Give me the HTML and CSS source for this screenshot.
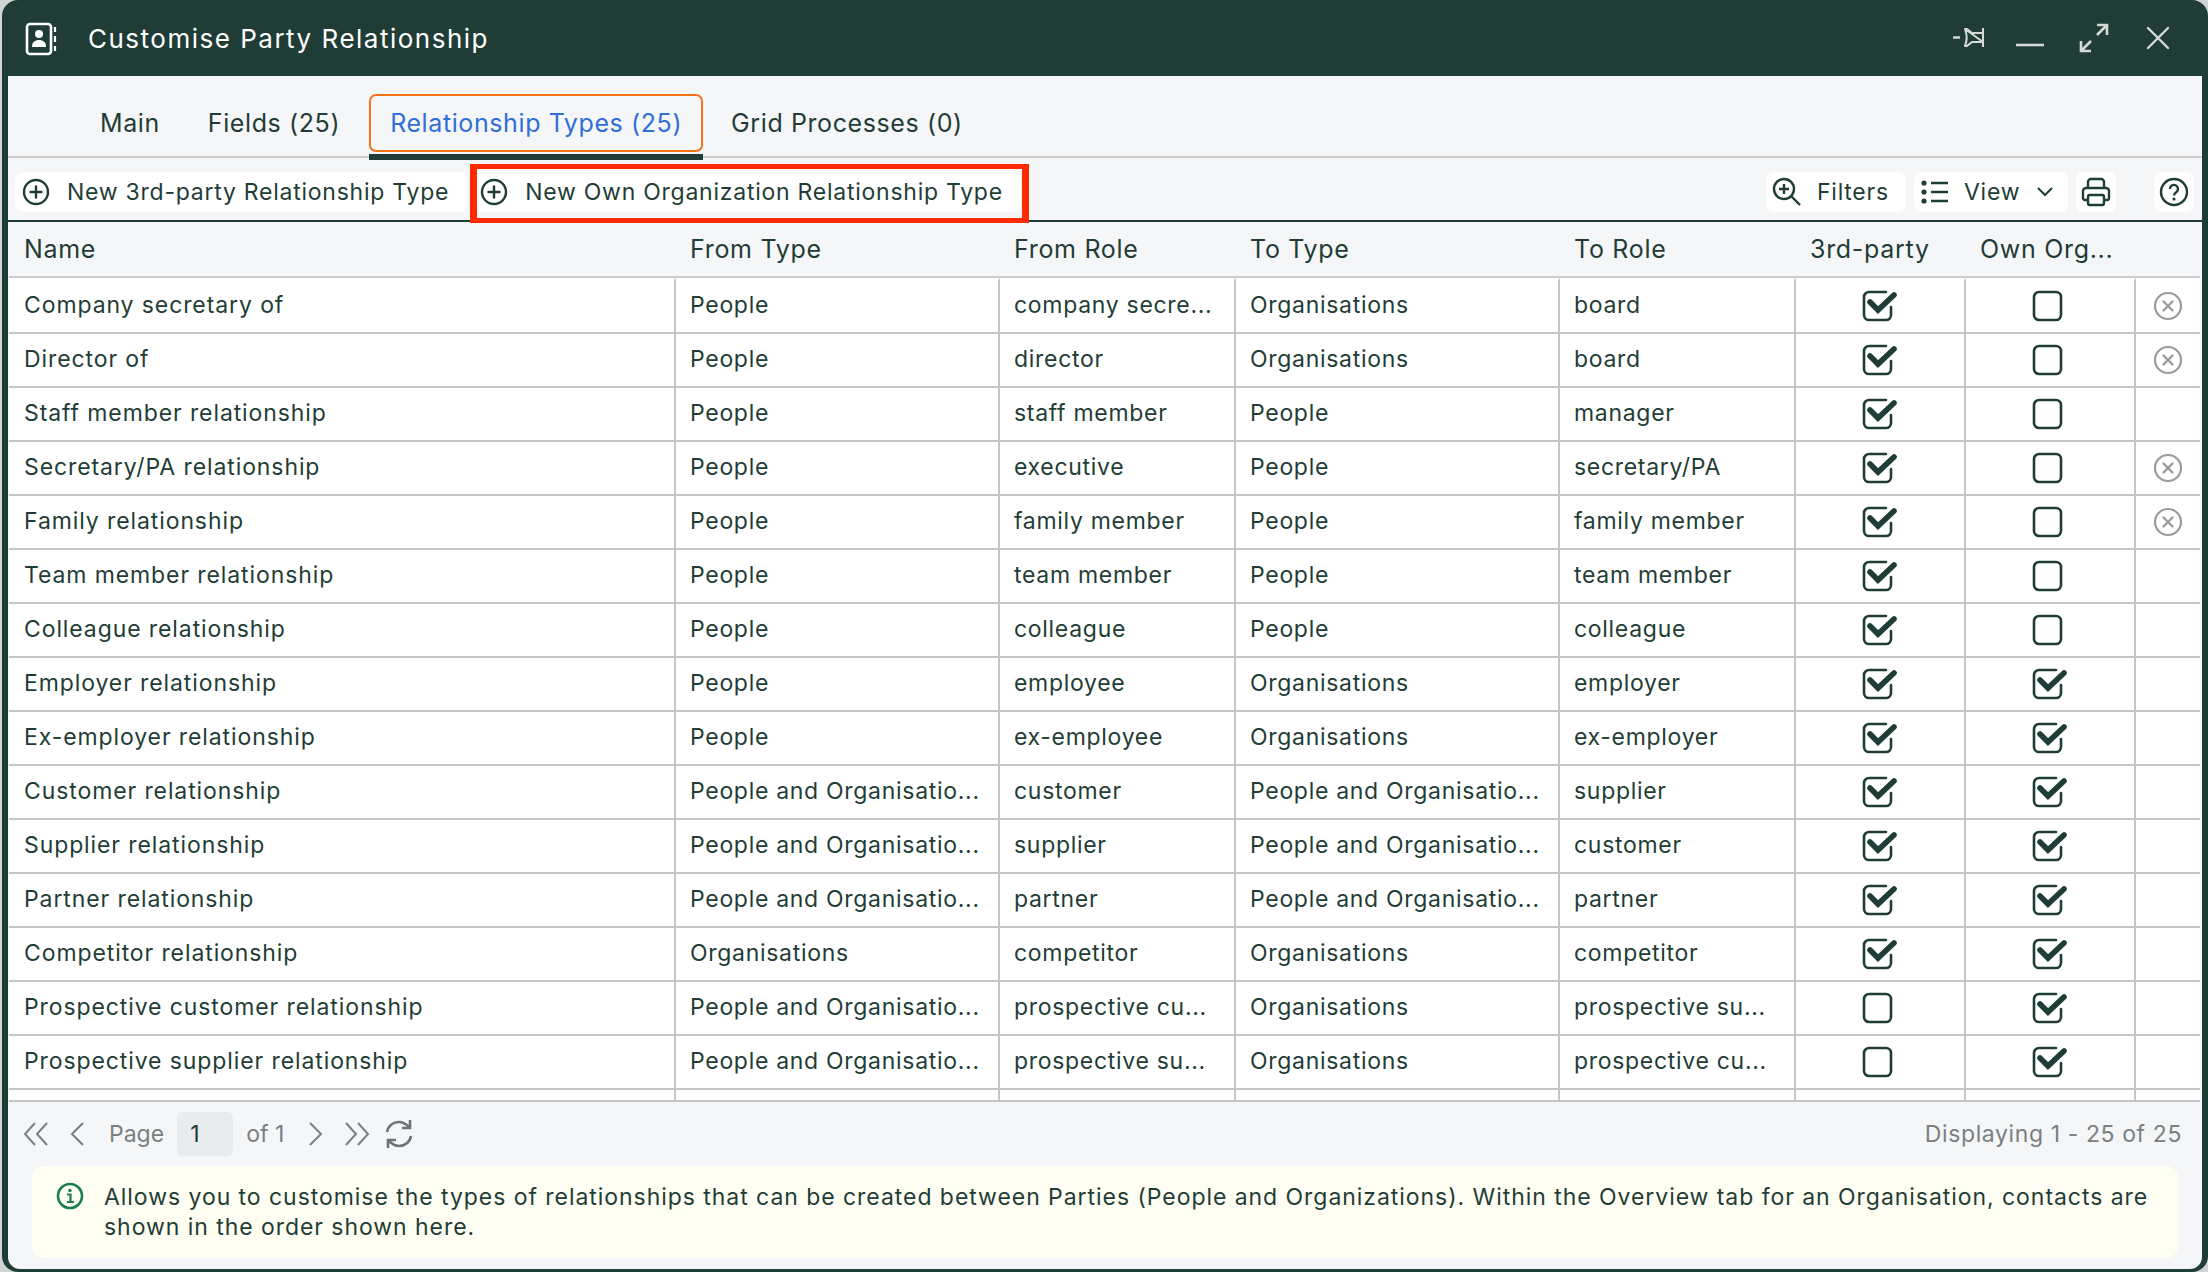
FILE: index.html
```html
<!DOCTYPE html>
<html lang="en">
<head>
  <meta charset="UTF-8" />
  <title>Customise Party Relationship</title>
  <link rel="stylesheet" href="styles.css">
</head>
<body>
  <svg class="sprite" width="0" height="0">
    <symbol id="checked" viewBox="0 0 36 32">
      <path d="M24 2H7a5 5 0 0 0-5 5v18a5 5 0 0 0 5 5h17a5 5 0 0 0 5-5v-8" fill="none" stroke="currentColor" stroke-width="2.6" stroke-linecap="round"/>
      <path d="M8 12l8 8L32 5" fill="none" stroke="currentColor" stroke-width="5.6" stroke-linejoin="miter" stroke-linecap="round"/>
    </symbol>
    <symbol id="unchecked" viewBox="0 0 36 32">
      <rect x="2" y="2" width="27" height="28" rx="5" fill="none" stroke="currentColor" stroke-width="2.6"/>
    </symbol>
    <symbol id="remove" viewBox="0 0 30 30">
      <circle cx="15" cy="15" r="13" fill="none" stroke="currentColor" stroke-width="2.2"/>
      <path d="M10.5 10.5l9 9M19.5 10.5l-9 9" fill="none" stroke="currentColor" stroke-width="2.4" stroke-linecap="round"/>
    </symbol>
    <symbol id="plus-circle" viewBox="0 0 28 28">
      <circle cx="14" cy="14" r="12" fill="none" stroke="currentColor" stroke-width="2.4"/>
      <path d="M14 8.5v11M8.5 14h11" fill="none" stroke="currentColor" stroke-width="2.4" stroke-linecap="round"/>
    </symbol>
  </svg>

  <div class="window">
    <div class="titlebar">
      <svg class="title-icon" width="32" height="34" viewBox="0 0 32 34">
        <rect x="2" y="2" width="24" height="30" rx="3" fill="none" stroke="currentColor" stroke-width="2.6"/>
        <circle cx="14" cy="12" r="4" fill="currentColor"/>
        <path d="M7 25c0-5 3-7 7-7s7 2 7 7z" fill="currentColor"/>
        <path d="M30 5v5M30 14v6M30 24v5" fill="none" stroke="currentColor" stroke-width="2.2"/>
      </svg>
      <span class="title">Customise Party Relationship</span>
      <div class="win-controls">
        <svg width="32" height="22" viewBox="0 0 32 22">
          <path d="M0 10.500h7" stroke="currentColor" stroke-width="2.4" fill="none"/>
          <path d="M12 2h2l5 4h11M30 1v19M30 15H19l-5 4h-2c2-5 2-12 0-17z" stroke="currentColor" stroke-width="2" fill="none" stroke-linejoin="round"/>
        </svg>
        <svg class="ctl-min" width="30" height="6" viewBox="0 0 30 6">
          <path d="M1 3h28" stroke="currentColor" stroke-width="2.6" fill="none"/>
        </svg>
        <svg class="ctl-max" width="32" height="32" viewBox="0 0 32 32">
          <path d="M19 3h10v10M29 3L19 13M3 19v10h10M3 29l10-10" stroke="currentColor" stroke-width="2.6" fill="none"/>
        </svg>
        <svg class="ctl-close" width="24" height="24" viewBox="0 0 24 24">
          <path d="M2 2l20 20M22 2L2 22" stroke="currentColor" stroke-width="2.4" fill="none" stroke-linecap="round"/>
        </svg>
      </div>
    </div>

    <div class="content">
      <div class="tabs">
        <a class="tab tab-main">Main</a>
        <a class="tab tab-fields">Fields (25)</a>
        <a class="tab active">Relationship Types (25)</a>
        <a class="tab tab-grid">Grid Processes (0)</a>
      </div>

      <div class="toolbar">
        <button class="btn"><svg width="28" height="28"><use href="#plus-circle"/></svg>New 3rd-party Relationship Type</button>
        <button class="btn btn-marked"><svg width="28" height="28"><use href="#plus-circle"/></svg>New Own Organization Relationship Type</button>
        <div class="toolbar-right">
          <button class="btn btn-filters">
            <svg width="30" height="30" viewBox="0 0 30 30">
              <circle cx="12" cy="12" r="10" fill="none" stroke="currentColor" stroke-width="2.4"/>
              <path d="M12 7v10M7 12h10" stroke="currentColor" stroke-width="2.4" fill="none"/>
              <path d="M19 19l9 9" stroke="currentColor" stroke-width="2.4" fill="none"/>
            </svg>
            Filters
          </button>
          <button class="btn btn-view">
            <svg width="28" height="24" viewBox="0 0 28 24">
              <circle cx="3" cy="3" r="2.6" fill="currentColor"/>
              <circle cx="3" cy="12" r="2.6" fill="currentColor"/>
              <circle cx="3" cy="21" r="2.6" fill="currentColor"/>
              <path d="M10 3h17M10 12h17M10 21h17" stroke="currentColor" stroke-width="2.6" fill="none"/>
            </svg>
            View
            <svg class="chev" width="16" height="10" viewBox="0 0 16 10">
              <path d="M1 1l7 7 7-7" stroke="currentColor" stroke-width="2" fill="none"/>
            </svg>
          </button>
          <button class="btn btn-icon">
            <svg width="30" height="30" viewBox="0 0 30 30">
              <path d="M7 11V5a3 3 0 0 1 3-3h10a3 3 0 0 1 3 3v6" fill="none" stroke="currentColor" stroke-width="2.4"/>
              <path d="M7 23H4a2 2 0 0 1-2-2v-7a3 3 0 0 1 3-3h20a3 3 0 0 1 3 3v7a2 2 0 0 1-2 2h-3" fill="none" stroke="currentColor" stroke-width="2.4"/>
              <rect x="7" y="18" width="16" height="10" rx="2" fill="none" stroke="currentColor" stroke-width="2.4"/>
            </svg>
          </button>
          <button class="btn btn-icon btn-help">
            <svg width="30" height="30" viewBox="0 0 30 30">
              <circle cx="15" cy="15" r="13" fill="none" stroke="currentColor" stroke-width="2.4"/>
              <path d="M11 12a4 4 0 1 1 6.500 3c-1.500 1-2.500 1.800-2.500 3.500" fill="none" stroke="currentColor" stroke-width="2.400"/>
              <circle cx="15" cy="22" r="1.600" fill="currentColor"/>
            </svg>
          </button>
        </div>
      </div>

      <table class="grid">
        <colgroup>
          <col class="c-name"><col class="c-wide"><col class="c-narrow"><col class="c-wide"><col class="c-narrow"><col class="c-flag"><col class="c-flag"><col class="c-del">
        </colgroup>
        <thead>
          <tr><th>Name</th><th>From Type</th><th>From Role</th><th>To Type</th><th>To Role</th><th>3rd-party</th><th>Own Org...</th><th></th></tr>
        </thead>
        <tbody id="rows"></tbody>
      </table>

      <div class="pager">
        <svg class="pg-first" width="26" height="26" viewBox="0 0 26 26"><path d="M12 2L2 13l10 11M24 2L14 13l10 11" fill="none" stroke="currentColor" stroke-width="2"/></svg>
        <svg class="pg-prev" width="16" height="26" viewBox="0 0 16 26"><path d="M14 2L3 13l11 11" fill="none" stroke="currentColor" stroke-width="2"/></svg>
        <span class="pg-label">Page</span>
        <span class="pg-input">1</span>
        <span class="pg-of">of 1</span>
        <svg class="pg-next" width="16" height="26" viewBox="0 0 16 26"><path d="M2 2l11 11L2 24" fill="none" stroke="currentColor" stroke-width="2"/></svg>
        <svg class="pg-last" width="26" height="26" viewBox="0 0 26 26"><path d="M2 2l10 11L2 24M14 2l10 11-10 11" fill="none" stroke="currentColor" stroke-width="2"/></svg>
        <svg class="pg-refresh" width="30" height="30" viewBox="0 0 30 30">
          <path d="M3 13C4 7 9 3 15 3c4 0 7 2 10 5M27 17c-1 6-6 10-12 10-4 0-7-2-10-5" fill="none" stroke="currentColor" stroke-width="2.600"/>
          <path d="M26 1v8h-8M4 29v-8h8" fill="none" stroke="currentColor" stroke-width="2.600"/>
        </svg>
        <span class="pg-total">Displaying 1 - 25 of 25</span>
      </div>

      <div class="notice">
        <svg width="28" height="28" viewBox="0 0 28 28">
          <circle cx="14" cy="14" r="12" fill="none" stroke="#1c7c54" stroke-width="2.600"/>
          <circle cx="14" cy="8.500" r="1.700" fill="#1c7c54"/>
          <path d="M11 12.500h3.500v7M11 20h7" fill="none" stroke="#1c7c54" stroke-width="2.200"/>
        </svg>
        <p>Allows you to customise the types of relationships that can be created between Parties (People and Organizations). Within the Overview tab for an Organisation, contacts are shown in the order shown here.</p>
      </div>
    </div>
  </div>

  <script>
    // name, from type, from role, to type, to role, 3rd-party, own org, removable
    const po = "People and Organisatio...";
    const data = [
      ["Company secretary of", "People", "company secre...", "Organisations", "board", 1, 0, 1],
      ["Director of", "People", "director", "Organisations", "board", 1, 0, 1],
      ["Staff member relationship", "People", "staff member", "People", "manager", 1, 0, 0],
      ["Secretary/PA relationship", "People", "executive", "People", "secretary/PA", 1, 0, 1],
      ["Family relationship", "People", "family member", "People", "family member", 1, 0, 1],
      ["Team member relationship", "People", "team member", "People", "team member", 1, 0, 0],
      ["Colleague relationship", "People", "colleague", "People", "colleague", 1, 0, 0],
      ["Employer relationship", "People", "employee", "Organisations", "employer", 1, 1, 0],
      ["Ex-employer relationship", "People", "ex-employee", "Organisations", "ex-employer", 1, 1, 0],
      ["Customer relationship", po, "customer", po, "supplier", 1, 1, 0],
      ["Supplier relationship", po, "supplier", po, "customer", 1, 1, 0],
      ["Partner relationship", po, "partner", po, "partner", 1, 1, 0],
      ["Competitor relationship", "Organisations", "competitor", "Organisations", "competitor", 1, 1, 0],
      ["Prospective customer relationship", po, "prospective cu...", "Organisations", "prospective su...", 0, 1, 0],
      ["Prospective supplier relationship", po, "prospective su...", "Organisations", "prospective cu...", 0, 1, 0],
    ];

    function flag(on) {
      return `<td class="flag"><svg width="36" height="32"><use href="#${on ? "checked" : "unchecked"}"/></svg></td>`;
    }

    let html = "";
    data.forEach((r) => {
      html += "<tr>";
      for (let i = 0; i < 5; i++) html += `<td>${r[i]}</td>`;
      html += flag(r[5]) + flag(r[6]);
      html += `<td class="del">${r[7] ? '<svg width="30" height="30"><use href="#remove"/></svg>' : ""}</td>`;
      html += "</tr>";
    });
    html += '<tr class="cut"><td></td><td></td><td></td><td></td><td></td><td></td><td></td><td></td></tr>';
    document.getElementById("rows").innerHTML = html;
  </script>
</body>
</html>
```

FILE: styles.css
```css
* {
  box-sizing: border-box;
}
body {
  margin: 0;
  height: 1272px;
  background: #d2d4d4;
  font-family: Inter, "Liberation Sans", sans-serif;
  font-size: 23px;
  letter-spacing: 0.7px;
  color: #1f3d36;
  overflow: hidden;
}
.sprite {
  position: absolute;
}
.window {
  margin-left: 2px;
  height: 1272px;
  background: #1f3d36;
  border-radius: 16px;
  padding: 0 6px 3px 6px;
  display: flex;
  flex-direction: column;
}
.titlebar {
  height: 76px;
  flex: none;
  display: flex;
  align-items: center;
  color: #fff;
}
.title-icon {
  margin-left: 17px;
  margin-top: 2px;
}
.title {
  margin-left: 31px;
  font-size: 26px;
  letter-spacing: 1.5px;
}
.win-controls {
  margin-left: auto;
  display: flex;
  align-items: center;
  color: #d5dad8;
  padding-right: 32px;
}
.ctl-min {
  margin: 14px 0 0 30px;
}
.ctl-max {
  margin-left: 33px;
}
.ctl-close {
  margin-left: 36px;
}
.content {
  flex: 1;
  background: #f5f6f8;
  border-radius: 0 0 12px 12px;
  display: flex;
  flex-direction: column;
}
.tabs {
  height: 82px;
  flex: none;
  border-bottom: 2px solid #cccccc;
  padding: 18px 0 0 68px;
  display: flex;
  align-items: flex-start;
  font-size: 25px;
  letter-spacing: 0.6px;
}
.tab {
  height: 58px;
  padding: 0 24px;
  display: flex;
  align-items: center;
}
.tab-fields {
  margin-right: 5px;
}
.tab.active {
  position: relative;
  color: #2f6fd6;
  padding: 0 19px;
  border: 2px solid #f97316;
  border-radius: 7px;
}
.tab.active::after {
  content: "";
  position: absolute;
  left: -2px;
  right: -2px;
  bottom: -10px;
  height: 6px;
  background: #1f3d36;
}
.tab-grid {
  margin-left: 4px;
}
.toolbar {
  height: 64px;
  flex: none;
  border-bottom: 2px solid #1f3d36;
  padding: 14px 8px 0 7px;
  display: flex;
  align-items: flex-start;
  gap: 6px;
}
.btn {
  height: 40px;
  padding: 0 18px 0 7px;
  border: 0;
  border-radius: 8px;
  background: #fff;
  font: inherit;
  letter-spacing: 0.75px;
  color: inherit;
  display: flex;
  align-items: center;
  gap: 17px;
  white-space: nowrap;
}
.btn-marked {
  position: relative;
}
.btn-marked::after {
  content: "";
  position: absolute;
  left: -3px;
  right: -8px;
  top: -8px;
  bottom: -11px;
  border: solid #ff2a00;
  border-width: 5px 7px;
}
.toolbar-right {
  margin-left: auto;
  display: flex;
  gap: 8px;
}
.btn-filters {
  width: 140px;
  padding: 0 0 0 6px;
  gap: 15px;
}
.btn-view {
  width: 154px;
  padding: 0 0 0 7px;
  gap: 15px;
}
.chev {
  margin-left: 2px;
}
.btn-icon {
  width: 40px;
  padding: 0;
  justify-content: center;
}
.btn-help {
  margin-left: 30px;
}
.grid {
  width: 2191px;
  margin-left: 1px;
  border-collapse: separate;
  border-spacing: 0;
  table-layout: fixed;
  flex: none;
}
.c-name {
  width: 667px;
}
.c-wide {
  width: 324px;
}
.c-narrow {
  width: 236px;
}
.c-flag {
  width: 170px;
}
th {
  height: 56px;
  padding: 0 0 0 14px;
  border-bottom: 2px solid #cccccc;
  text-align: left;
  font-size: 25px;
  font-weight: 400;
  white-space: nowrap;
}
th:first-child,
td:first-child {
  padding-left: 15px;
}
td {
  height: 54px;
  padding: 0 0 2px 14px;
  background: #fff;
  border-bottom: 2px solid #c6c6c6;
  border-right: 2px solid #c6c6c6;
  white-space: nowrap;
  overflow: hidden;
}
td:first-child {
  letter-spacing: 0.9px;
}
tbody tr:first-child td {
  height: 56px;
  border-top: 2px solid #fff;
}
td:last-child {
  border-right: 0;
}
td.flag,
td.del {
  padding: 0;
  text-align: center;
  line-height: 0;
}
td.del {
  color: #9a9a9a;
}
tr.cut td {
  height: 12px;
  padding: 0;
}
.pager {
  height: 64px;
  flex: none;
  padding: 0 20px 0 15px;
  display: flex;
  align-items: center;
  color: #7a7f80;
}
.pg-prev {
  margin-left: 20px;
}
.pg-label {
  margin-left: 24px;
  letter-spacing: 0;
}
.pg-input {
  width: 56px;
  height: 44px;
  margin-left: 13px;
  padding-left: 13px;
  background: #e8ecef;
  border-radius: 6px;
  color: #1f3d36;
  display: flex;
  align-items: center;
}
.pg-of {
  margin-left: 13px;
  letter-spacing: 0;
}
.pg-next {
  margin-left: 24px;
}
.pg-last {
  margin-left: 20px;
}
.pg-refresh {
  margin-left: 14px;
  color: #6e7375;
}
.pg-total {
  margin-left: auto;
  letter-spacing: 0.6px;
}
.notice {
  height: 92px;
  flex: none;
  margin: 0 24px 11px 24px;
  padding: 16px 20px 0 24px;
  background: #fffef2;
  border-radius: 12px;
  display: flex;
  gap: 20px;
  line-height: 30px;
  letter-spacing: 0.95px;
}
.notice svg {
  flex: none;
}
.notice p {
  margin: 0;
}
```
